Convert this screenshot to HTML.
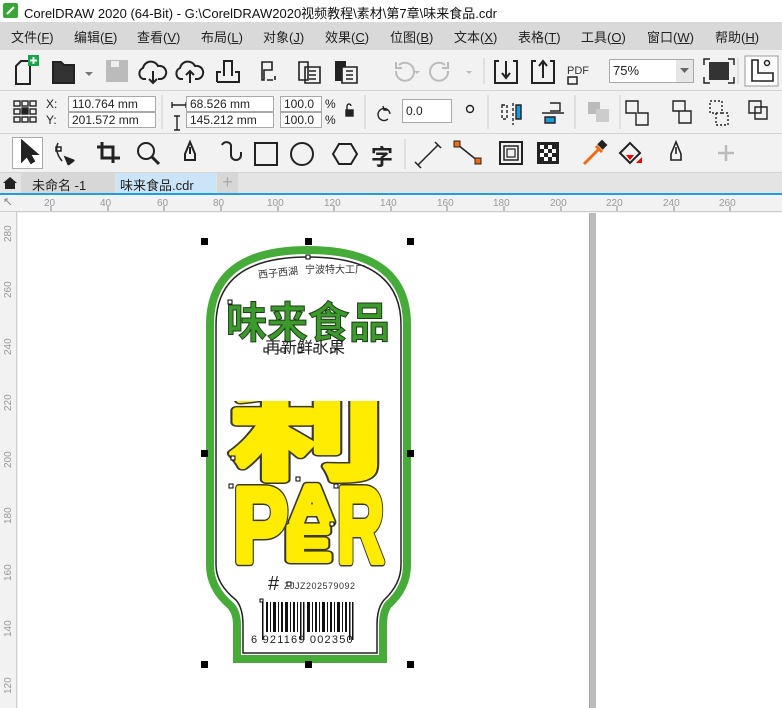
<!DOCTYPE html>
<html><head><meta charset="utf-8"><style>
*{margin:0;padding:0;box-sizing:border-box}
body{width:782px;height:708px;overflow:hidden;background:#f2f2f2;font-family:"Liberation Sans","Noto Sans CJK SC",sans-serif;position:relative;color:#222}
.a{position:absolute}
.menu span{position:absolute;top:27px;font-size:13px;color:#222}
.inp{position:absolute;background:#fff;border:1px solid #a9a9a9;font-size:12px;padding-left:3px;line-height:14px;height:16px}
.lbl{position:absolute;font-size:12px}
</style></head><body>
<div class="a" style="left:0;top:0;width:782px;height:22px;background:#fff"></div>
<svg class="a" style="left:3px;top:3px" width="15" height="15"><rect width="15" height="15" rx="2" fill="#3aa635"/><path d="M4 11 L11 4" stroke="#fff" stroke-width="2"/></svg>
<div class="a" style="left:24px;top:3px;font-size:13px;color:#111">CorelDRAW 2020 (64-Bit) - G:\CorelDRAW2020视频教程\素材\第7章\味来食品.cdr</div>
<div class="a" style="left:0;top:22px;width:782px;height:28px;background:#d9d9d9"></div>
<div class="menu">
<span style="left:11px">文件(<u>F</u>)</span><span style="left:74px">编辑(<u>E</u>)</span><span style="left:137px">查看(<u>V</u>)</span><span style="left:201px">布局(<u>L</u>)</span><span style="left:263px">对象(<u>J</u>)</span><span style="left:325px">效果(<u>C</u>)</span><span style="left:390px">位图(<u>B</u>)</span><span style="left:454px">文本(<u>X</u>)</span><span style="left:518px">表格(<u>T</u>)</span><span style="left:581px">工具(<u>O</u>)</span><span style="left:647px">窗口(<u>W</u>)</span><span style="left:715px">帮助(<u>H</u>)</span>
</div>
<div class="a" style="left:0;top:90px;width:782px;height:1px;background:#d4d4d4"></div>
<div class="a" style="left:0;top:133px;width:782px;height:1px;background:#d4d4d4"></div>
<div class="a" style="left:0;top:172px;width:782px;height:1px;background:#d4d4d4"></div>
<svg class="a" style="left:0;top:50px" width="782" height="40" fill="none" stroke="#222" stroke-width="2">
<path d="M16 34 V16 L21 11 H30 V34 Z"/><rect x="28" y="5" width="11" height="11" fill="#16a34a" stroke="none"/><path d="M33.5 7v7M30 10.5h7" stroke="#fff"/>
<path d="M53 33 V12 H61 L64 15 H74 V33 Z" fill="#333"/><path d="M85 22 l4 4 l4-4z" fill="#777" stroke="none"/>
<rect x="106" y="10" width="22" height="22" fill="#bbb" stroke="none"/><rect x="111" y="11" width="8" height="6" fill="#eee" stroke="none"/>
<path d="M146 29 h-3 a6 6 0 0 1 0-11 a8 8 0 0 1 15-2 a6 6 0 0 1 3 13 h-3 M153 21 v12 m-4-4 l4 4 l4-4"/>
<path d="M183 29 h-3 a6 6 0 0 1 0-11 a8 8 0 0 1 15-2 a6 6 0 0 1 3 13 h-3 M190 33 v-12 m-4 4 l4-4 l4 4"/>
<path d="M217 32 h22 v-10 h-4 M221 22 h-4 v10 M224 26 v-15 h8 v15"/>
<path d="M262 12 h10 v8 h-8 v10 h-2z M267 30 h6 M275 26 v4" stroke-width="1.6"/>
<path d="M299 12 h9 v18 h-9z M305 17 h15 v16 h-15z M309 21 h7 M309 25 h7 M309 29 h7" stroke-width="1.6"/>
<path d="M336 12 h9 v18 h-9z" fill="#222"/><path d="M342 17 h15 v16 h-15z M346 21 h7 M346 25 h7 M346 29 h7" stroke-width="1.6" fill="#f2f2f2"/>
<path d="M396 21 a9 9 0 1 0 3 -6 M396 12 v6 h6" stroke="#bbb"/><path d="M414 21 l3 3 l3-3" fill="#bbb" stroke="none"/>
<path d="M448 21 a9 9 0 1 1 -3 -6 M448 12 v6 h-6" stroke="#bbb"/><path d="M466 21 l3 3 l3-3" fill="#bbb" stroke="none"/>
<line x1="484" y1="8" x2="484" y2="34" stroke="#ccc" stroke-width="1"/>
<path d="M499 11 h-4 v22 h22 v-22 h-4 M506 11 v16 m-4-4 l4 5 l4-5"/>
<path d="M536 11 h-4 v22 h22 v-22 h-4 M543 28 v-16 m-4 4 l4-5 l4 5"/>
<text x="567" y="24" font-size="11" fill="#333" stroke="none" font-family="Liberation Sans">PDF</text><rect x="568" y="27" width="9" height="7" stroke-width="1.5"/>
<rect x="709" y="12" width="20" height="18" fill="#333" stroke="none"/><path d="M704 15 v-6 h6 M734 15 v-6 h-6 M704 27 v6 h6 M734 27 v6 h-6" stroke-width="1.5"/>
<line x1="738" y1="8" x2="738" y2="34" stroke="#ccc" stroke-width="1"/>
<rect x="745" y="6" width="33" height="30" fill="#fff" stroke="#999" stroke-width="1"/><path d="M752 10 v21 h21 v-8 h-15 v-13z" stroke-width="1.6"/><circle cx="767" cy="13" r="2.5" stroke-width="1.5"/>
</svg>
<div class="inp" style="left:609px;top:59px;width:85px;height:24px;line-height:22px;font-size:13px">75%</div>
<div class="a" style="left:676px;top:60px;width:17px;height:22px;background:#e6e6e6"></div>
<svg class="a" style="left:680px;top:68px" width="10" height="6"><path d="M0 0h9l-4.5 5z" fill="#666"/></svg>
<svg class="a" style="left:0;top:91px" width="782" height="42" fill="none" stroke="#222" stroke-width="1.4">
<rect x="14" y="10" width="6" height="5"/><rect x="22" y="10" width="6" height="5"/><rect x="30" y="10" width="6" height="5"/><rect x="14" y="18" width="6" height="5"/><rect x="22" y="17" width="6" height="6" fill="#222"/><rect x="30" y="18" width="6" height="5"/><rect x="14" y="26" width="6" height="5"/><rect x="22" y="26" width="6" height="5"/><rect x="30" y="26" width="6" height="5"/>
<path d="M172 14 h14 M172 11 v6 M186 11 v6"/><path d="M177 25 v14 M174 25 h6 M174 39 h6"/>
<rect x="346" y="19" width="7" height="6" fill="#222"/><path d="M347 19 v-4 a2 2 0 0 1 4 0"/>
<path d="M390 23 a6 6 0 1 0 -2 5 M383 15 l1 4 h4"/>
<circle cx="470" cy="18" r="3.5"/>
<path d="M502 14 h5 v14 h-5z M513 12 v22" stroke-dasharray="3 2"/><path d="M516 14 h5 v14 h-5z" fill="#1a9bd7"/>
<path d="M550 12 h10 v8 h-10 M542 22 h22" /><path d="M545 26 h10 v6 h-10z" fill="#1a9bd7"/>
<rect x="588" y="11" width="12" height="12" fill="#bbb" stroke="none"/><rect x="596" y="18" width="13" height="13" fill="#ccc" stroke="none"/>
<path d="M626 10 h12 v12 h10 v12 h-12 v-12 h-10z"/>
<path d="M673 10 h12 v10 h-12z M679 20 v12 h12 v-12 h-6"/>
<path d="M710 10 h12 v12 h-12z M716 22 v12 h12 v-12 h-6" stroke-dasharray="2 2"/>
<path d="M749 10 h12 v12 h-12z M755 16 h12 v12 h-12z"/>
<line x1="162" y1="4" x2="162" y2="38" stroke="#ccc" stroke-width="1"/><line x1="365" y1="4" x2="365" y2="38" stroke="#ccc" stroke-width="1"/>
<line x1="488" y1="4" x2="488" y2="38" stroke="#ccc" stroke-width="1"/><line x1="575" y1="4" x2="575" y2="38" stroke="#ccc" stroke-width="1"/><line x1="620" y1="4" x2="620" y2="38" stroke="#ccc" stroke-width="1"/>
</svg>
<div class="lbl" style="left:46px;top:97px">X:</div><div class="lbl" style="left:46px;top:113px">Y:</div>
<div class="inp" style="left:68px;top:96px;width:88px">110.764 mm</div><div class="inp" style="left:68px;top:112px;width:88px">201.572 mm</div>
<div class="inp" style="left:186px;top:96px;width:88px">68.526 mm</div><div class="inp" style="left:186px;top:112px;width:88px">145.212 mm</div>
<div class="inp" style="left:280px;top:96px;width:42px">100.0</div><div class="inp" style="left:280px;top:112px;width:42px">100.0</div>
<div class="lbl" style="left:325px;top:97px">%</div><div class="lbl" style="left:325px;top:113px">%</div>
<div class="inp" style="left:402px;top:99px;width:50px;height:24px;line-height:22px">0.0</div>
<div class="a" style="left:12px;top:137px;width:31px;height:32px;background:#fff;border:1px solid #aaa"></div>
<svg class="a" style="left:0;top:133px" width="782" height="40" fill="none" stroke="#222" stroke-width="2">
<path d="M22 8 v20 l5-5 l4 7 l3-2 l-4-7 h7z" fill="#222"/>
<path d="M58 10 q-4 8 4 18 M56 14 h5 v4 h-5z M65 24 l8 3 l-5 4z" stroke-width="1.5"/><path d="M67 26 l6 2 l-4 3z" fill="#222"/>
<path d="M102 9 v16 h18 M97 14 h16 v16" stroke-width="3"/>
<circle cx="146" cy="18" r="8"/><path d="M152 24 l7 7" stroke-width="3"/>
<path d="M190 9 l-5 12 v6 h10 v-6 z M190 14 v7"/>
<path d="M222 12 a5 5 0 0 1 9 0 v10 a5 5 0 0 0 10 0 v-3"/>
<rect x="255" y="10" width="22" height="22"/>
<circle cx="302" cy="21" r="11"/>
<path d="M333 21 l6-10 h12 l6 10 l-6 10 h-12z"/>
<text x="371" y="32" font-size="22" fill="#222" stroke="none" font-family="Noto Sans CJK SC" font-weight="bold">字</text>
<line x1="405" y1="6" x2="405" y2="36" stroke="#ccc" stroke-width="1"/>
<path d="M418 32 l20-20 M415 29 l6 6 M435 9 l6 6" stroke-width="1.5"/>
<path d="M458 12 l20 16" stroke-width="1.5"/><rect x="454" y="8" width="6" height="6" fill="#f26a11" stroke="#222" stroke-width="1"/><rect x="475" y="25" width="6" height="6" fill="#f26a11" stroke="#222" stroke-width="1"/>
<rect x="500" y="9" width="22" height="22"/><rect x="504" y="13" width="14" height="14" stroke-width="1.5"/><rect x="507" y="16" width="8" height="8" stroke-width="1.2"/>
<rect x="537" y="9" width="22" height="22" fill="#222" stroke="none"/>
<g fill="#fff" stroke="none"><rect x="540" y="12" width="4" height="4"/><rect x="548" y="12" width="4" height="4"/><rect x="544" y="16" width="4" height="4"/><rect x="552" y="16" width="4" height="4"/><rect x="540" y="20" width="4" height="4"/><rect x="548" y="20" width="4" height="4"/><rect x="544" y="24" width="4" height="4"/><rect x="552" y="24" width="4" height="4"/></g>
<path d="M584 31 l14-14 M596 13 l6 6" stroke="#f26a11" stroke-width="3"/><path d="M598 12 l4 -4 l4 4 l-4 4" fill="#222"/>
<path d="M620 20 l10-10 l10 10 l-10 10z" stroke-width="2"/><path d="M626 22 h8 l-4 5z" fill="#e00" stroke="none"/><path d="M636 30 l6-6 v6z" fill="#e00" stroke="none"/>
<path d="M676 9 l-5 12 v6 h10 v-6 z M676 14 v7" stroke-width="1.6"/>
<path d="M726 12 v16 M718 20 h16" stroke="#bbb" stroke-width="2.5"/>
</svg>
<div class="a" style="left:0;top:173px;width:782px;height:20px;background:#e4e4e4"></div>
<svg class="a" style="left:2px;top:176px" width="16" height="14"><path d="M1 7 L8 1 L15 7 H13 V13 H3 V7Z" fill="#222"/></svg>
<div class="a" style="left:21px;top:173px;width:94px;height:20px;background:#d7d7d7;font-size:13px;padding:2px 0 0 11px">未命名 -1</div>
<div class="a" style="left:116px;top:173px;width:100px;height:20px;background:#cce4f7;font-size:13px;padding:2px 0 0 4px">味来食品.cdr</div>
<div class="a" style="left:217px;top:173px;width:21px;height:20px;background:#d7d7d7;color:#aaa;font-size:18px;line-height:18px;text-align:center">+</div>
<div class="a" style="left:0;top:193px;width:782px;height:2px;background:#1ba1e2"></div>
<div class="a" style="left:0;top:195px;width:782px;height:17px;background:#f2f2f2;border-bottom:1px solid #ccc"></div>
<svg class="a" style="left:0;top:195px" width="782" height="17" font-size="10" font-family="Liberation Sans" fill="#999">
<text x="44" y="11">20</text><text x="100" y="11">40</text><text x="157" y="11">60</text><text x="213" y="11">80</text><text x="267" y="11">100</text><text x="324" y="11">120</text><text x="380" y="11">140</text><text x="437" y="11">160</text><text x="493" y="11">180</text><text x="550" y="11">200</text><text x="606" y="11">220</text><text x="663" y="11">240</text><text x="719" y="11">260</text>
<g stroke="#888" stroke-width="1"><path d="M51 11v5M108 11v5M164 11v5M221 11v5M278 11v5M334 11v5M391 11v5M447 11v5M504 11v5M561 11v5M617 11v5M674 11v5M730 11v5"/></g>
<path d="M5 4 l6 6 M5 4 h3 M5 4 v3" stroke="#888"/>
</svg>
<div class="a" style="left:0;top:212px;width:17px;height:496px;background:#f2f2f2;border-right:1px solid #ccc"></div>
<svg class="a" style="left:0;top:212px" width="17" height="496" font-size="10" font-family="Liberation Sans" fill="#999">
<g transform="rotate(-90)"><text x="-30" y="11">280</text><text x="-86" y="11">260</text><text x="-143" y="11">240</text><text x="-199" y="11">220</text><text x="-256" y="11">200</text><text x="-312" y="11">180</text><text x="-369" y="11">160</text><text x="-425" y="11">140</text><text x="-482" y="11">120</text></g>
</svg>
<div class="a" style="left:18px;top:213px;width:764px;height:495px;background:#fff"></div>
<div class="a" style="left:589px;top:213px;width:7px;height:495px;background:#bdbdbd;border-left:1px solid #a5a5a5"></div>
<svg class="a" style="left:0;top:0" width="782" height="708">
<defs>
<g id="big" font-weight="bold">
<text x="230" y="470" font-size="108" font-family="Noto Sans CJK SC" textLength="154" lengthAdjust="spacingAndGlyphs">利</text>
<text x="233" y="562" font-size="107" font-family="Liberation Sans" textLength="55" lengthAdjust="spacingAndGlyphs">P</text>
<text x="291" y="522" font-size="52" font-family="Liberation Sans" textLength="42" lengthAdjust="spacingAndGlyphs">A</text>
<text x="286" y="560" font-size="48" font-family="Liberation Sans" textLength="44" lengthAdjust="spacingAndGlyphs">E</text>
<text x="337" y="562" font-size="107" font-family="Liberation Sans" textLength="47" lengthAdjust="spacingAndGlyphs">R</text>
</g>
</defs>
<path d="M210 325 Q210 250 308 250 Q407 250 407 325 L407 565 Q407 588 388 605 Q383 612 383 625 L383 659 L237 659 L237 625 Q237 612 230 605 Q210 588 210 565 Z" fill="#fff" stroke="#46ab38" stroke-width="8"/>
<path d="M216 325 Q216 257 308 257 Q401 257 401 325 L401 565 Q401 584 384 600 Q377 608 377 625 L377 653 L243 653 L243 625 Q243 608 236 600 Q216 584 216 565 Z" fill="none" stroke="#222" stroke-width="1.5"/>
<text x="258" y="276" font-size="10" fill="#333" font-family="Noto Sans CJK SC" transform="rotate(-6 280 272)">西子西湖</text>
<text x="305" y="273" font-size="10" fill="#333" font-family="Noto Sans CJK SC">宁波特大工厂</text>
<text x="226" y="338" font-size="43" fill="#3c9a2c" stroke="#1c3a14" stroke-width="1" font-family="Noto Sans CJK SC" font-weight="bold" textLength="164" lengthAdjust="spacingAndGlyphs">味来食品</text>
<text x="265" y="353" font-size="16" fill="#222" font-family="Noto Sans CJK SC">再新鲜水果</text>
<use href="#big" fill="#3a3a2a" stroke="#3a3a2a" stroke-width="9" stroke-linejoin="round"/>
<use href="#big" fill="#ffec00" stroke="#ffec00" stroke-width="6" stroke-linejoin="round"/>
<rect x="226" y="362" width="160" height="39" fill="#fff"/>
<text x="268" y="590" font-size="20" fill="#222" font-family="Liberation Sans">#</text>
<text x="284" y="589" font-size="9" fill="#333" font-family="Liberation Sans" letter-spacing="0.5">ZJJZ202579092</text>
<g fill="#111">
<rect x="262" y="602" width="1.5" height="38"/><rect x="266" y="602" width="2" height="30"/><rect x="270" y="602" width="1" height="30"/><rect x="273" y="602" width="3" height="30"/><rect x="278" y="602" width="1" height="30"/><rect x="281" y="602" width="2" height="30"/><rect x="285" y="602" width="3" height="30"/><rect x="290" y="602" width="1" height="30"/><rect x="293" y="602" width="2" height="30"/><rect x="297" y="602" width="1" height="30"/><rect x="300" y="602" width="1.5" height="38"/><rect x="303" y="602" width="1.5" height="38"/><rect x="307" y="602" width="3" height="30"/><rect x="312" y="602" width="1" height="30"/><rect x="315" y="602" width="2" height="30"/><rect x="319" y="602" width="1" height="30"/><rect x="322" y="602" width="3" height="30"/><rect x="327" y="602" width="1" height="30"/><rect x="330" y="602" width="2" height="30"/><rect x="334" y="602" width="1" height="30"/><rect x="337" y="602" width="3" height="30"/><rect x="342" y="602" width="1" height="30"/><rect x="345" y="602" width="2" height="30"/><rect x="349" y="602" width="1.5" height="38"/><rect x="352" y="602" width="1.5" height="38"/>
</g>
<text x="251" y="643" font-size="11" fill="#222" font-family="Liberation Sans" letter-spacing="1.2">6 921169 002350</text>
<g fill="#000"><rect x="201" y="238" width="7" height="7"/><rect x="305" y="238" width="7" height="7"/><rect x="407" y="238" width="7" height="7"/><rect x="201" y="450" width="7" height="7"/><rect x="407" y="450" width="7" height="7"/><rect x="201" y="661" width="7" height="7"/><rect x="305" y="661" width="7" height="7"/><rect x="407" y="661" width="7" height="7"/></g>
<g fill="#fff" stroke="#000" stroke-width="1"><rect x="264" y="348" width="4" height="4"/><rect x="281" y="348" width="4" height="4"/><rect x="298" y="348" width="4" height="4"/><rect x="314" y="348" width="4" height="4"/><rect x="331" y="348" width="4" height="4"/><rect x="228" y="300" width="4" height="4"/><rect x="231" y="456" width="4" height="4"/><rect x="229" y="484" width="4" height="4"/><rect x="296" y="477" width="4" height="4"/><rect x="334" y="484" width="4" height="4"/><rect x="330" y="522" width="4" height="4"/><rect x="306" y="255" width="4" height="4"/><rect x="287" y="582" width="4" height="4"/><rect x="260" y="599" width="3" height="3"/></g>
</svg>
</body></html>
